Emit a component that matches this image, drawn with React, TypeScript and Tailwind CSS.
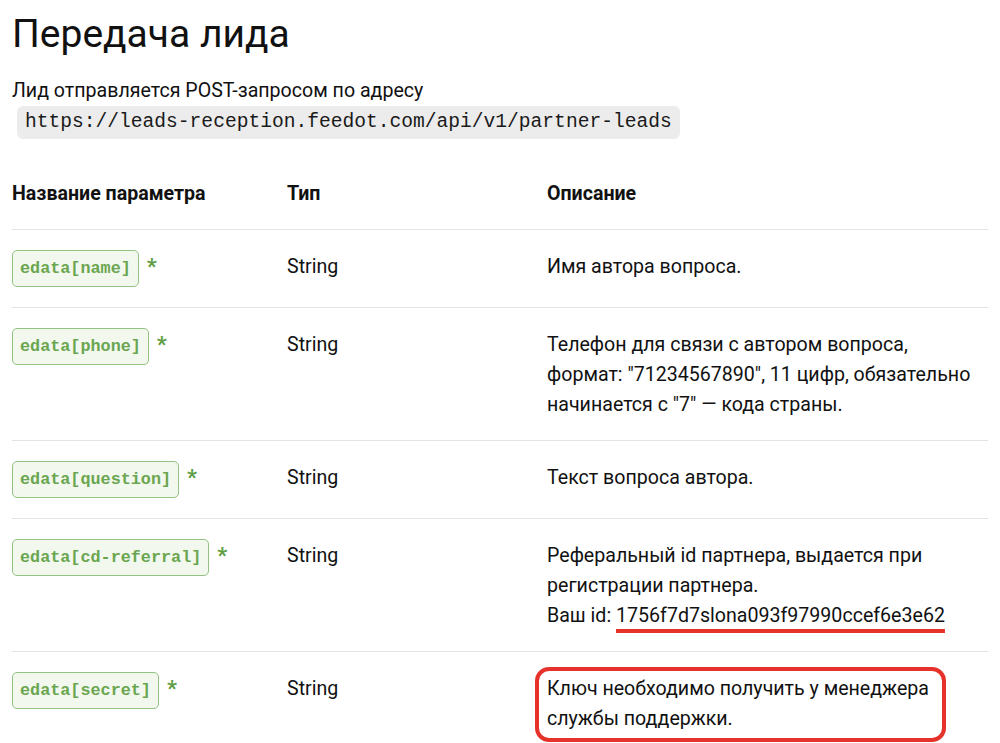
const params = [
  {
    name: "edata[name]",
    type: "String",
    description: <>Имя автора вопроса.</>,
  },
  {
    name: "edata[phone]",
    type: "String",
    description: (
      <>
        Телефон для связи с автором вопроса, формат: "71234567890", 11 цифр, обязательно начинается с "7" — кода
        страны.
      </>
    ),
  },
  {
    name: "edata[question]",
    type: "String",
    description: <>Текст вопроса автора.</>,
  },
  {
    name: "edata[cd-referral]",
    type: "String",
    description: (
      <>
        Реферальный id партнера, выдается при регистрации партнера.
        <br />
        Ваш id:{" "}
        <span className="underline decoration-[#e5322b] decoration-[4px] underline-offset-[7px]">
          1756f7d7slona093f97990ccef6e3e62
        </span>
      </>
    ),
  },
  {
    name: "edata[secret]",
    type: "String",
    highlight: true,
    description: <>Ключ необходимо получить у менеджера службы поддержки.</>,
  },
];

function ParamBadge({ name }: { name: string }) {
  return (
    <span className="whitespace-nowrap">
      <span className="inline-block rounded-[5px] border border-[#93c382] bg-[#f2f8ee] px-[7px] py-[7px] font-['Liberation_Mono',monospace] text-[16.8px] font-bold leading-[21px] text-[#6aa650]">
        {name}
      </span>
      <span className="relative top-[1px] ml-[8px] text-[22px] font-bold text-[#5f9f45]">*</span>
    </span>
  );
}

export default function App() {
  return (
    <div className="min-h-screen bg-white px-[12px] font-['Roboto',sans-serif] text-[19.6px] leading-[30px] text-[#111]">
      <h1 className="pt-[9px] text-[39px] leading-[50px] font-normal">Передача лида</h1>
      <p className="mt-[17px]">
        Лид отправляется POST-запросом по адресу
        <br />
        <code className="ml-[5px] inline-block rounded-[6px] bg-[#ececec] px-[8px] py-[3px] font-['Liberation_Mono',monospace] text-[19.6px] leading-[27px] text-[#1a1a1a]">
          https://leads-reception.feedot.com/api/v1/partner-leads
        </code>
      </p>

      <div className="mt-[20px]">
        <div className="grid grid-cols-[275px_260px_1fr] items-baseline border-b border-[#e4e4e4] py-[20px] font-bold">
          <div>Название параметра</div>
          <div>Тип</div>
          <div>Описание</div>
        </div>
        {params.map((p) => (
          <div
            className="grid grid-cols-[275px_260px_1fr] items-baseline border-b border-[#e4e4e4] py-[20px]"
            key={p.name}
          >
            <div>
              <ParamBadge name={p.name} />
            </div>
            <div>{p.type}</div>
            <div className="relative pr-[4px]">
              {p.description}
              {p.highlight && (
                <span className="pointer-events-none absolute -left-[12px] -top-[7px] -bottom-[8px] w-[411px] rounded-[14px] border-4 border-[#e5322b]" />
              )}
            </div>
          </div>
        ))}
      </div>
    </div>
  );
}
